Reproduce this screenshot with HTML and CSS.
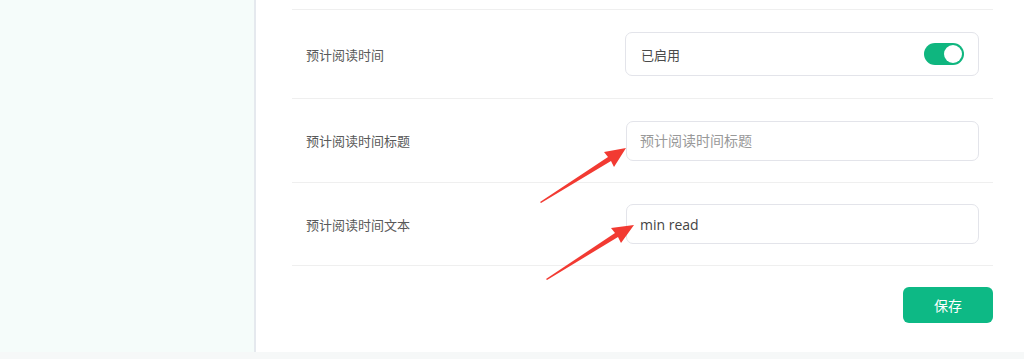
FILE: index.html
```html
<!DOCTYPE html>
<html lang="zh-CN">

<head>
	<meta charset="UTF-8">
	<meta name="viewport" content="width=device-width, initial-scale=1.0">
	<title>阅读时间设置</title>
	<link rel="stylesheet" href="styles.css">
</head>

<body>
	<div class="layout">
		<aside class="sidebar"></aside>
		<main class="main">
			<div class="settings">
				<div class="row row-first">
					<span class="label">预计阅读时间</span>
					<div class="control switch-box">
						<span>已启用</span>
						<span class="switch on"><span class="knob"></span></span>
					</div>
				</div>
				<div class="row row-second">
					<span class="label">预计阅读时间标题</span>
					<input type="text" class="control text-input" placeholder="预计阅读时间标题">
				</div>
				<div class="row row-third">
					<span class="label">预计阅读时间文本</span>
					<input type="text" class="control text-input" value="min read">
				</div>
			</div>
			<div class="actions">
				<button type="button" class="save-btn">保存</button>
			</div>
		</main>
	</div>
	<div class="bottom-strip"></div>

	<svg class="arrows" width="1024" height="359" viewBox="0 0 1024 359">
		<g fill="#f23a32">
			<polygon points="540,202 541,203 611,161 614,167 626,148 604,152 608,157" />
			<polygon points="546,279 547,280 618,237 621,243 634,225 611,228 615,233" />
		</g>
	</svg>
</body>

</html>
```

FILE: styles.css
```css
body
{
	margin: 0;
	font-family: 'Noto Sans CJK SC', 'Liberation Sans', sans-serif;
	background-color: #ffffff;
	color: #333;
	width: 1024px;
	height: 359px;
	overflow: hidden;
	position: relative;
}

.layout
{
	display: flex;
	height: 352px;
}

.sidebar
{
	width: 254px;
	background-color: #f5fcfa;
	border-right: 2px solid #e5e9ee;
	flex-shrink: 0;
}

.main
{
	flex: 1;
	padding: 9px 31px 0 36px;
	background-color: #fff;
}

.settings
{
	width: 701px;
}

.row
{
	display: flex;
	align-items: center;
	justify-content: space-between;
	padding: 0 14px;
	border-top: 1px solid #efefef;
	box-sizing: border-box;
}

.row-first
{
	height: 89px;
}

.row-second
{
	height: 84px;
}

.row-third
{
	height: 84px;
	border-bottom: 1px solid #efefef;
}

.label
{
	font-size: 13px;
	color: #595959;
}

.control
{
	width: 354px;
	box-sizing: border-box;
	border: 1px solid #e3e4ea;
	border-radius: 7px;
	background-color: #fff;
	font-family: inherit;
}

.switch-box
{
	height: 44px;
	display: flex;
	align-items: center;
	justify-content: space-between;
	padding: 0 14px 0 15px;
	font-size: 13px;
	color: #4a4a4a;
}

.switch
{
	width: 40px;
	height: 22px;
	border-radius: 11px;
	background-color: #0fb67f;
	display: flex;
	align-items: center;
	justify-content: flex-end;
	padding: 0 2px;
	box-sizing: border-box;
}

.knob
{
	width: 18px;
	height: 18px;
	border-radius: 50%;
	background-color: #fff;
}

.text-input
{
	width: 353px;
	height: 40px;
	padding: 0 13px;
	font-family: 'Open Sans', 'Noto Sans CJK SC', sans-serif;
	font-size: 14px;
	color: #444;
	outline: none;
}

.text-input::placeholder
{
	color: #999;
}

.actions
{
	width: 701px;
	display: flex;
	justify-content: flex-end;
	padding-top: 21px;
}

.save-btn
{
	width: 90px;
	height: 36px;
	border: none;
	border-radius: 6px;
	background-color: #0db985;
	color: #fff;
	font-family: inherit;
	font-size: 14px;
	cursor: pointer;
}

.bottom-strip
{
	height: 7px;
	background-color: #f6f8f8;
}

.arrows
{
	position: absolute;
	left: 0;
	top: 0;
	pointer-events: none;
}
```
